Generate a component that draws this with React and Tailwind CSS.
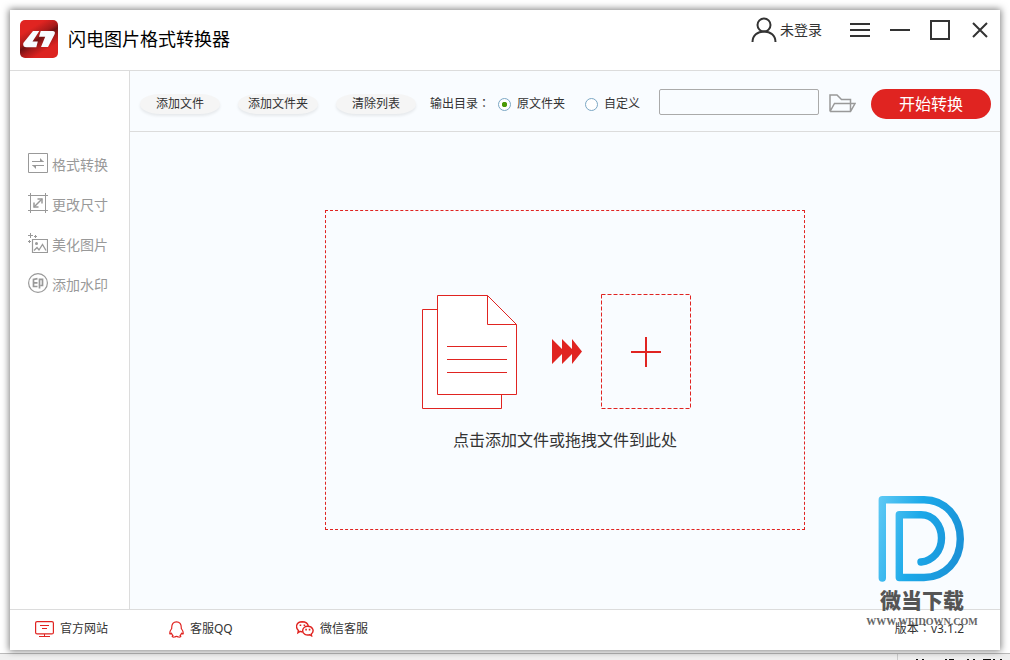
import React, { useState } from "react";

const navItems = [
  { label: "格式转换", Icon: ConvertIcon },
  { label: "更改尺寸", Icon: ResizeIcon },
  { label: "美化图片", Icon: BeautifyIcon },
  { label: "添加水印", Icon: StampIcon },
];

function Logo() {
  return (
    <svg width="38" height="38" viewBox="0 0 38 38" aria-hidden="true">
      <defs>
        <linearGradient id="logoBg" x1="0.2" y1="0" x2="0.8" y2="1">
          <stop offset="0.2" stopColor="#e02421" />
          <stop offset="0.42" stopColor="#a51a1a" />
          <stop offset="0.5" stopColor="#6f1012" />
          <stop offset="0.62" stopColor="#a51a1a" />
          <stop offset="0.8" stopColor="#dc2320" />
        </linearGradient>
      </defs>
      <rect width="38" height="38" rx="5" fill="url(#logoBg)" />
      <path d="M13 11H19.300L12.500 21.500H17.800L16.300 27.200H6.500Q2.500 27.200 3.300 23Z" fill="#f8fbff" />
      <path d="M20.700 11H32.500Q36 11 34.500 14.500L28 27H21L25.200 16.700H19Z" fill="#f8fbff" />
    </svg>
  );
}

function UserIcon() {
  return (
    <svg width="26" height="26" viewBox="0 0 26 26" fill="none" stroke="#333" strokeWidth="2" aria-hidden="true">
      <circle cx="13" cy="8" r="6.500" />
      <path d="M1.500 25C1.500 18.500 6.500 14.500 13 14.500S24.500 18.500 24.500 25" />
    </svg>
  );
}

function ConvertIcon() {
  return (
    <svg width="20" height="20" viewBox="0 0 20 20" fill="none" stroke="#999" aria-hidden="true">
      <path d="M.5 .5H19.500V19.500H.5Z" />
      <path d="M4 8.500H15.500M4.500 12.500H16" />
      <path d="M12 5L16 9H12ZM8 16L4 12H8Z" fill="#999" stroke="none" />
    </svg>
  );
}

function ResizeIcon() {
  return (
    <svg width="20" height="20" viewBox="0 0 20 20" fill="none" stroke="#999" aria-hidden="true">
      <path d="M0 2.500H20M0 17.500H20M2.500 0V20M17.500 0V20" />
      <path d="M6 14L14 6" strokeWidth="1.500" />
      <path d="M9.500 6H14V10.500M6 9.500V14H10.500" strokeWidth="1.500" />
    </svg>
  );
}

function BeautifyIcon() {
  return (
    <svg width="20" height="20" viewBox="0 0 20 20" fill="none" stroke="#999" aria-hidden="true">
      <path d="M4.500 6.500H19.500V19.500H4.500Z" strokeWidth="1.200" />
      <path d="M2.500 0V5M0 2.500H5M7.500 2V5M6 3.500H9M1.500 7V10M0 8.500H3" />
      <circle cx="8.500" cy="10.500" r="1.500" fill="#999" stroke="none" />
      <path d="M6 17.500L9 14.500L11 17L14.500 11.500L18 17.500" strokeWidth="1.300" />
    </svg>
  );
}

function StampIcon() {
  return (
    <svg width="20" height="20" viewBox="0 0 20 20" fill="none" stroke="#999" aria-hidden="true">
      <circle cx="10" cy="10" r="9.400" strokeWidth="1.200" />
      <path d="M9.500 5.700L5.500 6.500V13.500H9.500M5.500 9.800H9.500M11.500 15.500V6.300H14.500V12.500H12.500" strokeWidth="1.700" />
    </svg>
  );
}

function FolderIcon() {
  return (
    <svg width="27" height="19" viewBox="0 0 27 19" fill="none" stroke="#999" strokeWidth="1.500" aria-hidden="true">
      <path d="M1 17.500V1H8L12.500 5.500H21.500V9.500M1 17.500H21.500L26 9.500H5.500L1 17.500M21.500 9.500V17.500" />
    </svg>
  );
}

function DropArt() {
  return (
    <svg width="288" height="116" viewBox="0 0 288 116" fill="none" stroke="#e02421" aria-hidden="true">
      <path d="M1.500 15.500H80.500V114.500H1.500Z" fill="#fff" />
      <path d="M16.500 1.500H66.500L95.500 30.500V100.500H16.500Z" fill="#fff" />
      <path d="M66.500 1.500V30.500H95.500M26 52.500H86M26 65.500H86M26 78.500H86" />
      <path d="M131 45L141 55V45L151 55V45L161 57.500L151 70V60L141 70V60L131 70Z" fill="#e02421" stroke="none" />
      <path d="M180.500 .5H269.500V114.500H180.500Z" strokeDasharray="4 2" />
      <path d="M210 58H240M225 43V73" strokeWidth="2" />
    </svg>
  );
}

function SiteIcon() {
  return (
    <svg width="19" height="16" viewBox="0 0 19 16" fill="none" stroke="#e02421" aria-hidden="true">
      <rect x=".6" y=".6" width="17.800" height="12.300" rx="1.500" strokeWidth="1.200" />
      <path d="M5 4.500H14M7 7.500H12M9.500 13V15.500M4 15.500H15" />
    </svg>
  );
}

function QQIcon() {
  return (
    <svg width="15" height="17" viewBox="0 0 15 17" fill="none" stroke="#e02421" strokeWidth="1.200" strokeLinejoin="round" aria-hidden="true">
      <path d="M2.700 7.500C2.500 3 4.500.8 7.500.8S12.500 3 12.300 7.500C13.500 9 14.400 11 14.200 12.800C13.700 13.300 13 12.800 12.600 12.200C12.300 13.300 11.700 14 11 14.600C12.800 15.600 11 16.300 9.500 16C8.500 15.700 8 15.300 7.500 15.300S6.500 15.700 5.500 16C4 16.300 2.200 15.600 4 14.600C3.300 14 2.700 13.300 2.400 12.200C2 12.800 1.300 13.300.8 12.800C.6 11 1.500 9 2.700 7.500Z" />
    </svg>
  );
}

function WechatIcon() {
  return (
    <svg width="18" height="16" viewBox="0 0 19 17" fill="none" stroke="#e02421" strokeWidth="1.500" aria-hidden="true">
      <path d="M7 11.500C6 11.500 5 11.300 4.300 11L2 12.500L2.500 10C-.8 7-.3 1 6.500.8C10 .8 12.500 2.800 13 5.300" />
      <path d="M12.500 5.500C9.500 5.500 7 7.500 7 10.300C7 14 11 15.500 14.500 14.600L16.500 15.800L16.200 13.800C20 10.800 17.500 5.500 12.500 5.500Z" />
      <path d="M3.800 4.500H5.500M8 4.500H9.700M9.800 9.200H11.500M13.500 9.200H15.200" strokeWidth="1.700" />
    </svg>
  );
}

function Watermark() {
  return (
    <div className="pointer-events-none absolute right-[23px] bottom-5 flex w-[110px] flex-col items-center">
      <svg width="88" height="88" viewBox="0 0 88 88" fill="none" aria-hidden="true">
        <defs>
          <linearGradient id="markBlue" gradientUnits="userSpaceOnUse" x1="0" y1="0" x2="88" y2="20">
            <stop offset="0" stopColor="#60caf5" />
            <stop offset="0.5" stopColor="#1ba9e9" />
            <stop offset="1" stopColor="#1b93d8" />
          </linearGradient>
        </defs>
        <path
          d="M4.300 82V3.700H46C67 3.700 82.300 21 82.300 43S67 81.500 46 81.500H21.300V18.700H43C55 18.700 63.500 29 63.500 42C63.500 55 55 64.500 43 66"
          stroke="url(#markBlue)"
          strokeWidth="7.400"
          strokeLinecap="round"
          strokeLinejoin="round"
        />
      </svg>
      <span className="mt-1 text-[21px] leading-6 font-black text-[#555]">微当下载</span>
      <span className="mt-0.5 font-['Liberation_Serif',serif] text-[10px] leading-4 font-bold whitespace-nowrap text-[#666]">
        WWW.WEIDOWN.COM
      </span>
    </div>
  );
}

function Colon() {
  return <span className="font-['Noto_Sans_CJK_TC',sans-serif] leading-none">：</span>;
}

function PillButton({ children }) {
  return (
    <button
      type="button"
      className="h-5 w-20 shrink-0 rounded-[20px/10px] bg-[#f5f5f5] text-xs leading-5 shadow-[0_2px_3px_rgba(0,0,0,0.08)]"
    >
      {children}
    </button>
  );
}

function RadioOption({ label, value, selected, onSelect }) {
  return (
    <label className="flex shrink-0 items-center gap-1.5">
      <input
        type="radio"
        name="output"
        value={value}
        checked={selected}
        onChange={() => onSelect(value)}
        className="h-[13px] w-[13px] appearance-none rounded-full border border-[#7ba7c4] bg-white checked:bg-[radial-gradient(circle,#4a9a05_0_2px,#5a9e20_2.5px,#fff_3px)]"
      />
      {label}
    </label>
  );
}

export default function App() {
  const [output, setOutput] = useState("source");
  const [folder, setFolder] = useState("");

  return (
    <div className="relative flex min-h-screen flex-col overflow-hidden bg-white p-2.5 font-['Noto_Sans','Noto_Sans_CJK_SC',sans-serif] text-xs text-[#333]">
      <div className="absolute inset-x-0 bottom-0 flex h-[7px] justify-end border-t border-[#bbb] bg-[#f0f0f0]">
        <div className="flex w-[113px] items-end border-l border-[#ccc] pl-4">
          <svg width="90" height="2" viewBox="0 0 90 2" fill="none" stroke="#111" aria-hidden="true">
            <path d="M2 1.500H4M8 1.500H10M31 1.500H33M35 1.500H40M53 1.500H55M59 1.500H61M69 1.500H77M79 1.500H81M86 1.500H88" />
          </svg>
        </div>
      </div>

      <div className="relative flex grow flex-col bg-white shadow-[0_0_7px_1px_rgba(0,0,0,0.5)]">
        <header className="flex h-[61px] items-start justify-between border-b border-[#dcdcdc] pr-2.5 pl-2.5">
          <div className="flex items-center gap-2.5 pt-2.5">
            <Logo />
            <h1 className="text-lg text-black">闪电图片格式转换器</h1>
          </div>
          <div className="flex h-10 items-center">
            <button type="button" className="mr-7 flex items-center gap-[3px] text-sm">
              <UserIcon />
              未登录
            </button>
            <div className="flex items-center gap-5 text-[#333]">
              <button type="button" aria-label="菜单">
                <svg width="20" height="20" viewBox="0 0 20 20" stroke="currentColor" strokeWidth="2">
                  <path d="M0 4H20M0 10H20M0 16H20" />
                </svg>
              </button>
              <button type="button" aria-label="最小化">
                <svg width="20" height="20" viewBox="0 0 20 20" stroke="currentColor" strokeWidth="2">
                  <path d="M0 10H20" />
                </svg>
              </button>
              <button type="button" aria-label="最大化">
                <svg width="20" height="20" viewBox="0 0 20 20" fill="none" stroke="currentColor" strokeWidth="2">
                  <path d="M1 1H19V19H1Z" />
                </svg>
              </button>
              <button type="button" aria-label="关闭">
                <svg width="20" height="20" viewBox="0 0 20 20" stroke="currentColor" strokeWidth="2">
                  <path d="M3 3L17 17M17 3L3 17" />
                </svg>
              </button>
            </div>
          </div>
        </header>

        <div className="flex grow">
          <nav className="flex w-[120px] shrink-0 flex-col gap-5 border-r border-[#dcdcdc] pt-[82px] pl-[18px]">
            {navItems.map(({ label, Icon }) => (
              <button key={label} type="button" className="flex h-5 items-center gap-1 text-sm text-[#999]">
                <Icon />
                <span className="pt-1">{label}</span>
              </button>
            ))}
          </nav>

          <div className="flex min-w-0 grow flex-col bg-[#f9fcff]">
            <div className="flex h-[61px] items-center border-b border-[#dcdcdc] pt-1.5 pr-[9px] pl-2.5">
              <div className="flex gap-[18px]">
                <PillButton>添加文件</PillButton>
                <PillButton>添加文件夹</PillButton>
                <PillButton>清除列表</PillButton>
              </div>
              <div role="radiogroup" aria-labelledby="outLabel" className="ml-3.5 flex shrink-0 items-center">
                <span id="outLabel" className="mr-2 w-[60px] whitespace-nowrap">
                  输出目录
                  <Colon />
                </span>
                <div className="flex gap-5">
                  <RadioOption label="原文件夹" value="source" selected={output === "source"} onSelect={setOutput} />
                  <RadioOption label="自定义" value="custom" selected={output === "custom"} onSelect={setOutput} />
                </div>
              </div>
              <input
                type="text"
                aria-label="输出目录"
                value={folder}
                onChange={(e) => setFolder(e.target.value)}
                className="mb-1 ml-[19px] h-[26px] min-w-0 grow rounded-xs border border-[#aaa] bg-[#f9fcff] px-1"
              />
              <button type="button" aria-label="浏览" className="mb-0.5 ml-2.5 shrink-0">
                <FolderIcon />
              </button>
              <button type="button" className="ml-[15px] h-[30px] w-[120px] shrink-0 rounded-full bg-[#e02421] text-base text-white">
                开始转换
              </button>
            </div>

            <main className="flex grow items-center justify-center pb-0.5">
              <button
                type="button"
                className="flex h-80 w-[480px] flex-col items-center border border-dashed border-[#e02421] pt-[83px]"
              >
                <DropArt />
                <span className="mt-[18px] text-base">点击添加文件或拖拽文件到此处</span>
              </button>
            </main>
          </div>
        </div>

        <footer className="flex h-[41px] items-center border-t border-[#dcdcdc] pr-9 pb-0.5 pl-[25px]">
          <a href="#site" className="flex w-[134px] items-center gap-1.5">
            <SiteIcon />
            官方网站
          </a>
          <a href="#qq" className="flex w-[127px] items-center gap-1.5">
            <QQIcon />
            客服QQ
          </a>
          <a href="#wechat" className="flex items-center gap-1.5">
            <WechatIcon />
            微信客服
          </a>
          <span className="ml-auto">
            版本
            <Colon />
            v3.1.2
          </span>
        </footer>

        <Watermark />
      </div>
    </div>
  );
}
